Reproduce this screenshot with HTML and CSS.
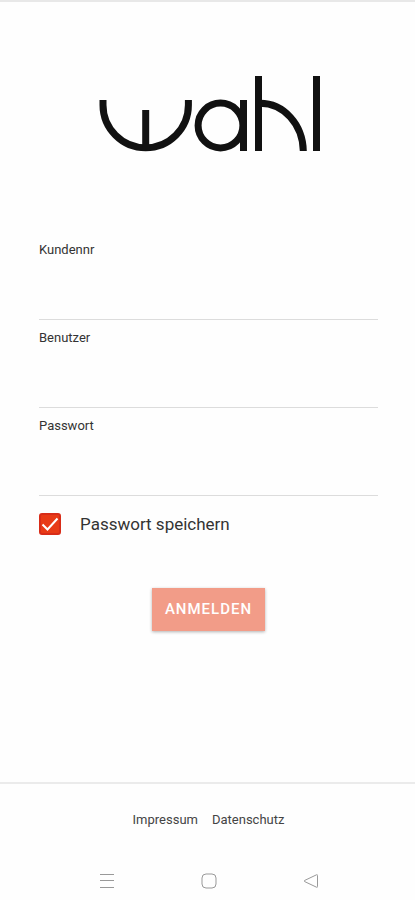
FILE: index.html
```html
<!DOCTYPE html>
<html lang="de">
<head>
<meta charset="utf-8">
<meta name="viewport" content="width=device-width, initial-scale=1">
<title>Wahl – Anmelden</title>
<link rel="stylesheet" href="styles.css">
</head>
<body>
<main class="login">
  <svg class="logo" viewBox="97 75 223 77" role="img" aria-label="wahl">
    <g fill="none" stroke="#111" stroke-width="7">
      <path d="M103 100V105A42.7 42.7 0 0 0 188.4 105V100"/>
      <path d="M145.7 110V148"/>
      <circle cx="220.5" cy="125.5" r="22.4"/>
      <path d="M243.5 100V151"/>
      <path d="M258.5 76V151"/>
      <path d="M260 103.3C284 103.3 302.8 124.600 303.300 151"/>
      <path d="M316.500 76V151"/>
    </g>
  </svg>
  <form class="form">
    <div class="field">
      <label for="customer">Kundennr</label>
      <input id="customer" type="text">
    </div>
    <div class="field">
      <label for="user">Benutzer</label>
      <input id="user" type="text">
    </div>
    <div class="field">
      <label for="password">Passwort</label>
      <input id="password" type="password">
    </div>
    <div class="remember">
      <span class="check">
        <input id="remember" type="checkbox" checked>
        <svg viewBox="0 0 22 22" aria-hidden="true"><path d="M3.500 11.500L8.500 16.500L18.500 5.500"/></svg>
      </span>
      <label for="remember">Passwort speichern</label>
    </div>
    <button class="submit" type="button">ANMELDEN</button>
  </form>
</main>
<footer class="links">
  <a href="#impressum">Impressum</a>
  <a href="#datenschutz">Datenschutz</a>
</footer>
<nav class="system" aria-label="System">
  <button type="button" aria-label="Übersicht"><svg viewBox="0 0 18 18"><path d="M2 2.500H16M2 8.500H16M2 15.500H16"/></svg></button>
  <button type="button" aria-label="Start"><svg viewBox="0 0 18 18"><rect x="2" y="2" width="14" height="14" rx="4"/></svg></button>
  <button type="button" aria-label="Zurück"><svg viewBox="0 0 18 18"><path d="M14.500 2.800Q15.500 2.300 15.500 3.500V14.500Q15.500 15.700 14.500 15.200L2.500 9.500Q1.800 9 2.500 8.500Z"/></svg></button>
</nav>
</body>
</html>
```
FILE: styles.css
```css
* {
  box-sizing: border-box;
}

body {
  display: flex;
  flex-direction: column;
  min-height: 100vh;
  margin: 0;
  border-top: 2px solid #e8e8e8;
  background: #fefefe;
  color: #333;
  font-family: Roboto, "Liberation Sans", sans-serif;
}

.login {
  display: flex;
  flex: 1;
  flex-direction: column;
  padding: 73px 37px 0 39px;
}

.logo {
  align-self: center;
  width: 223px;
  height: 77px;
}

.form {
  display: flex;
  flex-direction: column;
  margin-top: 80px;
}

.field {
  display: flex;
  flex-direction: column;
  height: 88px;
  padding-top: 10px;
  border-bottom: 1px solid #dcdcdc;
}

.field label {
  font-size: 13px;
  line-height: 16px;
}

.field input {
  flex: 1;
  width: 100%;
  padding: 0;
  border: 0;
  outline: 0;
  background: transparent;
  font: 17px Roboto, sans-serif;
}

.remember {
  display: flex;
  align-items: center;
  gap: 19px;
  margin-top: 17px;
  font-size: 17px;
  line-height: 22px;
}

.check {
  display: grid;
  width: 22px;
  height: 22px;
}

.check > * {
  grid-area: 1 / 1;
}

.check input {
  width: 22px;
  height: 22px;
  margin: 0;
  appearance: none;
  border: 2px solid #d82c18;
  border-radius: 3px;
  background: #e83a16;
}

.check svg {
  z-index: 1;
  fill: none;
  stroke: #fff;
  stroke-width: 2;
  pointer-events: none;
}

.submit {
  align-self: center;
  height: 43px;
  margin-top: 53px;
  padding: 0 13px 2px;
  border: 0;
  background: #f29c88;
  box-shadow: 0 1px 3px rgba(0, 0, 0, 0.3);
  color: #fff;
  font: 500 15px Roboto, sans-serif;
  letter-spacing: 1px;
}

.links {
  display: flex;
  justify-content: center;
  gap: 14px;
  padding: 28px 0 32px 2px;
  border-top: 2px solid #ebebeb;
  font-size: 13px;
  line-height: 16px;
}

.links a {
  color: #444;
  text-decoration: none;
}

.system {
  display: flex;
  justify-content: center;
  gap: 84px;
  padding: 12px 0 10px 2px;
}

.system button {
  width: 18px;
  height: 18px;
  padding: 0;
  border: 0;
  background: none;
}

.system svg {
  display: block;
  fill: none;
  stroke: #999;
  stroke-width: 1;
}
```
